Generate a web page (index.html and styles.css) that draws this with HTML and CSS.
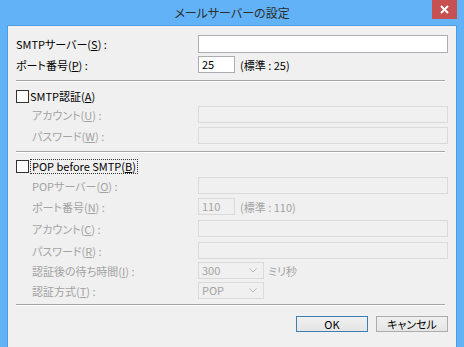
FILE: index.html
```html
<!doctype html>
<html>
<head>
  <meta charset="utf-8">
  <link rel="stylesheet" href="styles.css">
</head>
<body>
  <div class="window">
    <div class="titlebar">
      <span class="title">メールサーバーの設定</span>
      <div class="close">
        <svg width="9" height="9" viewBox="0 0 9 9"><path d="M1 1L8 8M8 1L1 8" stroke="#fff" stroke-width="2"/></svg>
      </div>
    </div>

    <div class="client">
      <div class="row first">
        <span class="lbl">SMTPサーバー(<u>S</u>) :</span>
        <div class="field wide"></div>
      </div>
      <div class="row r2">
        <span class="lbl">ポート番号(<u>P</u>) :</span>
        <div class="field short">25</div>
        <span class="note">(標準 : 25)</span>
      </div>

      <div class="sep s1"></div>

      <div class="row check c1">
        <span class="box"></span>
        <span>SMTP認証(<u>A</u>)</span>
      </div>
      <div class="row sub off m2">
        <span class="lbl">アカウント(<u>U</u>) :</span>
        <div class="field wide"></div>
      </div>
      <div class="row sub off">
        <span class="lbl">パスワード(<u>W</u>) :</span>
        <div class="field wide"></div>
      </div>

      <div class="sep s2"></div>

      <div class="row check c2">
        <span class="box"></span>
        <span class="focus">POP before SMTP(<u>B</u>)</span>
      </div>
      <div class="row sub off m3">
        <span class="lbl">POPサーバー(<u>O</u>) :</span>
        <div class="field wide"></div>
      </div>
      <div class="row sub off">
        <span class="lbl">ポート番号(<u>N</u>) :</span>
        <div class="field short">110</div>
        <span class="note">(標準 : 110)</span>
      </div>
      <div class="row sub off m5">
        <span class="lbl">アカウント(<u>C</u>) :</span>
        <div class="field wide"></div>
      </div>
      <div class="row sub off m5">
        <span class="lbl">パスワード(<u>R</u>) :</span>
        <div class="field wide"></div>
      </div>
      <div class="row sub off m3">
        <span class="lbl">認証後の待ち時間(<u>I</u>) :</span>
        <div class="field select">300
          <svg width="8" height="5" viewBox="0 0 8 5"><path d="M0.5 0.5L4 4L7.5 0.5" stroke="#b8b8b8" fill="none"/></svg>
        </div>
        <span class="unit">ミリ秒</span>
      </div>
      <div class="row sub off m3">
        <span class="lbl">認証方式(<u>T</u>) :</span>
        <div class="field select">POP
          <svg width="8" height="5" viewBox="0 0 8 5"><path d="M0.5 0.5L4 4L7.5 0.5" stroke="#b8b8b8" fill="none"/></svg>
        </div>
      </div>

      <div class="sep s3"></div>

      <div class="buttons">
        <button class="btn default">OK</button>
        <button class="btn">キャンセル</button>
      </div>
    </div>
  </div>
</body>
</html>
```

FILE: styles.css
```css
body {
  margin: 0;
  background-color: #62b2f8;
  font-family: "Noto Sans CJK JP", "Noto Sans", sans-serif;
  font-size: 11px;
  font-feature-settings: "palt";
  color: #000;
}
.window {
  height: 347px;
  display: flex;
  flex-direction: column;
}
.titlebar {
  height: 25px;
  flex: none;
  display: flex;
  justify-content: center;
  align-items: center;
  position: relative;
}
.title {
  color: #2d2d2d;
  font-size: 12px;
}
.close {
  position: absolute;
  top: 0;
  right: 7px;
  width: 25px;
  height: 19px;
  background-color: #c75050;
  display: flex;
  justify-content: center;
  align-items: center;
}
.client {
  flex: none;
  margin: 0 7px;
  height: 313px;
  border: 1px solid #4f9ce2;
  background-color: #f0f0f0;
  padding: 9px 8px 0 8px;
  display: flex;
  flex-direction: column;
}
.row {
  display: flex;
  align-items: center;
  height: 17px;
  margin-top: 4px;
  white-space: nowrap;
}
.row.first {
  height: 18px;
  margin-top: 0;
}
.r2 { margin-top: 3px; }
.m2 { margin-top: 2px; }
.m3 { margin-top: 3px; }
.m5 { margin-top: 5px; }
.lbl {
  width: 182px;
  flex: none;
}
.sub {
  padding-left: 16px;
}
.sub .lbl {
  width: 166px;
}
.field {
  box-sizing: border-box;
  height: 100%;
  border: 1px solid #abadb3;
  background-color: #fff;
  padding-left: 3px;
  line-height: 15px;
  flex: none;
}
.wide { width: 250px; }
.short { width: 37px; }
.select {
  width: 66px;
  display: flex;
  justify-content: space-between;
  align-items: center;
  padding-right: 6px;
}
.note {
  margin-left: 5px;
}
.unit {
  margin-left: 4px;
}
.off {
  color: #a3a3a3;
}
.off .field {
  background-color: #f0f0f0;
  border-color: #dadada;
}
.sep {
  height: 0;
  width: 429px;
  border-top: 1px solid #a6a6a6;
  border-bottom: 1px solid #fff;
  flex: none;
}
.s1 { margin-top: 7px; }
.s2 { margin-top: 7px; }
.s3 { margin-top: 5px; }
.check {
  height: 16px;
}
.c1 { margin-top: 6px; }
.c2 { margin-top: 5px; }
.box {
  box-sizing: border-box;
  width: 13px;
  height: 13px;
  border: 1px solid #333;
  background-color: #fff;
  margin-right: 1px;
  flex: none;
}
.focus {
  border: 1px dotted #333;
  line-height: 13px;
  padding: 0 1px;
}
.buttons {
  display: flex;
  justify-content: flex-end;
  gap: 8px;
  margin-top: 10px;
}
.btn {
  width: 72px;
  height: 16px;
  padding: 0;
  border: 1px solid #acacac;
  background-color: #e8e8e8;
  background-image: linear-gradient(to bottom, #f0f0f0, #e5e5e5);
  font-family: "Noto Sans CJK JP", "Noto Sans", sans-serif;
  font-size: 11px;
  font-feature-settings: "palt";
  color: #000;
  line-height: 14px;
}
.btn.default {
  border-color: #3c7fb1;
}
```
